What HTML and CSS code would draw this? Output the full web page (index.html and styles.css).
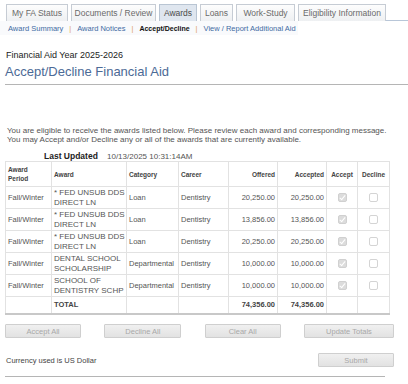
FILE: index.html
```html
<!DOCTYPE html>
<html lang="en">
<head>
  <meta charset="UTF-8">
  <title>Accept/Decline Financial Aid</title>
  <link rel="stylesheet" href="styles.css">
</head>
<body>
  <nav class="tabs">
    <div class="tab" style="width:62px">My FA Status</div>
    <div class="tab" style="width:85px">Documents / Review</div>
    <div class="tab active" style="width:38px">Awards</div>
    <div class="tab" style="width:33px">Loans</div>
    <div class="tab" style="width:59px">Work-Study</div>
    <div class="tab" style="width:88px">Eligibility Information</div>
    <div class="tab-fill"></div>
  </nav>

  <div class="subnav">
    <a href="#">Award Summary</a><span class="sep">|</span>
    <a href="#">Award Notices</a><span class="sep">|</span>
    <span class="current">Accept/Decline</span><span class="sep">|</span>
    <a href="#">View / Report Additional Aid</a>
  </div>

  <div class="page-head">
    <div class="aid-year">Financial Aid Year 2025-2026</div>
    <h1>Accept/Decline Financial Aid</h1>
  </div>

  <p class="intro">You are eligible to receive the awards listed below. Please review each award and corresponding message.<br>You may Accept and/or Decline any or all of the awards that are currently available.</p>

  <div class="updated"><b>Last Updated</b><span>10/13/2025 10:31:14AM</span></div>

  <table class="awards">
    <colgroup>
      <col style="width:46px"><col style="width:75px"><col style="width:52px"><col style="width:50px">
      <col style="width:49px"><col style="width:49px"><col style="width:31px"><col style="width:32px">
    </colgroup>
    <thead>
      <tr>
        <th>Award<br>Period</th><th>Award</th><th>Category</th><th>Career</th>
        <th class="num">Offered</th><th class="num">Accepted</th><th class="ctr">Accept</th><th class="ctr">Decline</th>
      </tr>
    </thead>
    <tbody>
      <tr>
        <td>Fall/Winter</td><td class="award">* FED UNSUB DDS<br>DIRECT LN</td><td>Loan</td><td>Dentistry</td>
        <td class="num">20,250.00</td><td class="num">20,250.00</td>
        <td class="ctr"><span class="box checked"></span></td><td class="ctr"><span class="box"></span></td>
      </tr>
      <tr>
        <td>Fall/Winter</td><td class="award">* FED UNSUB DDS<br>DIRECT LN</td><td>Loan</td><td>Dentistry</td>
        <td class="num">13,856.00</td><td class="num">13,856.00</td>
        <td class="ctr"><span class="box checked"></span></td><td class="ctr"><span class="box"></span></td>
      </tr>
      <tr>
        <td>Fall/Winter</td><td class="award">* FED UNSUB DDS<br>DIRECT LN</td><td>Loan</td><td>Dentistry</td>
        <td class="num">20,250.00</td><td class="num">20,250.00</td>
        <td class="ctr"><span class="box checked"></span></td><td class="ctr"><span class="box"></span></td>
      </tr>
      <tr>
        <td>Fall/Winter</td><td class="award">DENTAL SCHOOL<br>SCHOLARSHIP</td><td>Departmental</td><td>Dentistry</td>
        <td class="num">10,000.00</td><td class="num">10,000.00</td>
        <td class="ctr"><span class="box checked"></span></td><td class="ctr"><span class="box"></span></td>
      </tr>
      <tr>
        <td>Fall/Winter</td><td class="award">SCHOOL OF<br>DENTISTRY SCHP</td><td>Departmental</td><td>Dentistry</td>
        <td class="num">10,000.00</td><td class="num">10,000.00</td>
        <td class="ctr"><span class="box checked"></span></td><td class="ctr"><span class="box"></span></td>
      </tr>
      <tr class="total">
        <td></td><td><b>TOTAL</b></td><td></td><td></td>
        <td class="num"><b>74,356.00</b></td><td class="num"><b>74,356.00</b></td><td></td><td></td>
      </tr>
    </tbody>
  </table>

  <div class="actions">
    <button class="btn" style="width:76px">Accept All</button>
    <button class="btn" style="width:77px">Decline All</button>
    <button class="btn" style="width:76px">Clear All</button>
    <button class="btn" style="width:90px">Update Totals</button>
  </div>

  <div class="footer-row">
    <span class="currency">Currency used is US Dollar</span>
    <button class="btn" style="width:76px">Submit</button>
  </div>

  <hr class="bottom-line">
</body>
</html>
```

FILE: styles.css
```css
/* Global */
body {
  margin: 0;
  padding: 0;
  background: #fff;
  font-family: 'Liberation Sans', Arial, sans-serif;
  color: #333;
  width: 408px;
}

/* Tabs */
.tabs {
  display: flex;
  align-items: flex-end;
  gap: 3px;
  padding: 4px 0 0 6px;
  height: 17px;
}

.tab {
  box-sizing: border-box;
  height: 17px;
  border: 1px solid #c6ccd4;
  border-bottom: none;
  background: linear-gradient(#fdfdfd, #eef0f2);
  color: #6a6a6a;
  font-size: 8.5px;
  line-height: 16px;
  text-align: center;
  white-space: nowrap;
}

.tab.active {
  background: #dfe6ef;
  border-color: #b9c5d3;
  color: #4b4b4b;
}

.tab-fill {
  flex: 1;
  height: 0;
  border-bottom: 1px solid #b8c6d8;
  margin-left: -3px;
}

/* Sub navigation */
.subnav {
  display: flex;
  align-items: center;
  height: 14px;
  padding-left: 8px;
  font-size: 7.5px;
  background: #f9fafc;
  margin-right: 110px;
}

.subnav a {
  color: #3f6ba3;
  text-decoration: none;
}

.subnav .sep {
  color: #e0a060;
  margin: 0 6px;
}

.subnav .current {
  color: #111;
  font-weight: bold;
  font-size: 7px;
}

/* Page heading */
.page-head {
  margin: 15px 0 0 5px;
  border-bottom: 1px solid #b5b5b5;
  padding-bottom: 4px;
}

.aid-year {
  font-size: 9px;
  color: #222;
  padding-left: 1px;
  line-height: 11px;
}

h1 {
  margin: 3px 0 0;
  font-size: 13px;
  font-weight: normal;
  color: #4c6a96;
  line-height: 16px;
}

.intro {
  margin: 41px 0 0 7px;
  font-size: 8px;
  line-height: 9px;
  color: #555;
}

.updated {
  display: flex;
  align-items: baseline;
  margin: 7px 0 0 44px;
  font-size: 8px;
  height: 10px;
  line-height: 10px;
}

.updated b {
  font-size: 8.5px;
  color: #222;
  width: 63px;
}

.updated span {
  color: #555;
}

/* Awards table */
.awards {
  margin: 0 0 0 5px;
  border-collapse: collapse;
  table-layout: fixed;
  width: 384px;
  border: 1px solid #c8c8c8;
  border-bottom: 2px solid #c8c8c8;
  font-size: 7.5px;
  color: #555;
}

.awards th,
.awards td {
  border: 1px solid #e2e2e2;
  padding: 0 2px;
  text-align: left;
  vertical-align: middle;
  white-space: nowrap;
  overflow: hidden;
}

.awards th {
  height: 24px;
  font-size: 6.5px;
  color: #444;
  line-height: 9px;
}

.awards td {
  height: 21px;
  line-height: 10px;
}

.awards td.award {
  font-size: 8px;
  color: #555;
}

.awards .num { text-align: right; }
.awards .ctr { text-align: center; }

.awards tr.total td {
  height: 16px;
  color: #444;
}

.box {
  display: inline-block;
  box-sizing: border-box;
  width: 9px;
  height: 9px;
  border: 1px solid #d4d4d4;
  border-radius: 2px;
  background: #fff;
  vertical-align: middle;
  position: relative;
}

.box.checked {
  background: #dcdcdc;
  border-color: #d0d0d0;
}

.box.checked::after {
  content: "";
  position: absolute;
  left: 2px;
  top: 0;
  width: 2px;
  height: 5px;
  border: solid #fff;
  border-width: 0 1px 1px 0;
  transform: rotate(40deg);
}

/* Buttons */
.actions {
  display: flex;
  justify-content: space-between;
  margin: 9px 14px 0 5px;
}

.btn {
  box-sizing: border-box;
  height: 14px;
  padding: 0;
  border: 1px solid #cfcfcf;
  background: linear-gradient(#f0f0f0, #e2e2e2);
  color: #a8a8a8;
  font-family: 'Liberation Sans', Arial, sans-serif;
  font-size: 7.5px;
  border-radius: 1px;
}

.footer-row {
  display: flex;
  justify-content: space-between;
  align-items: center;
  margin: 15px 14px 0 6px;
}

.currency {
  font-size: 7.5px;
  color: #444;
}

.bottom-line {
  margin: 9px 23px 0 5px;
  border: none;
  border-top: 1px solid #b5b5b5;
}
```
